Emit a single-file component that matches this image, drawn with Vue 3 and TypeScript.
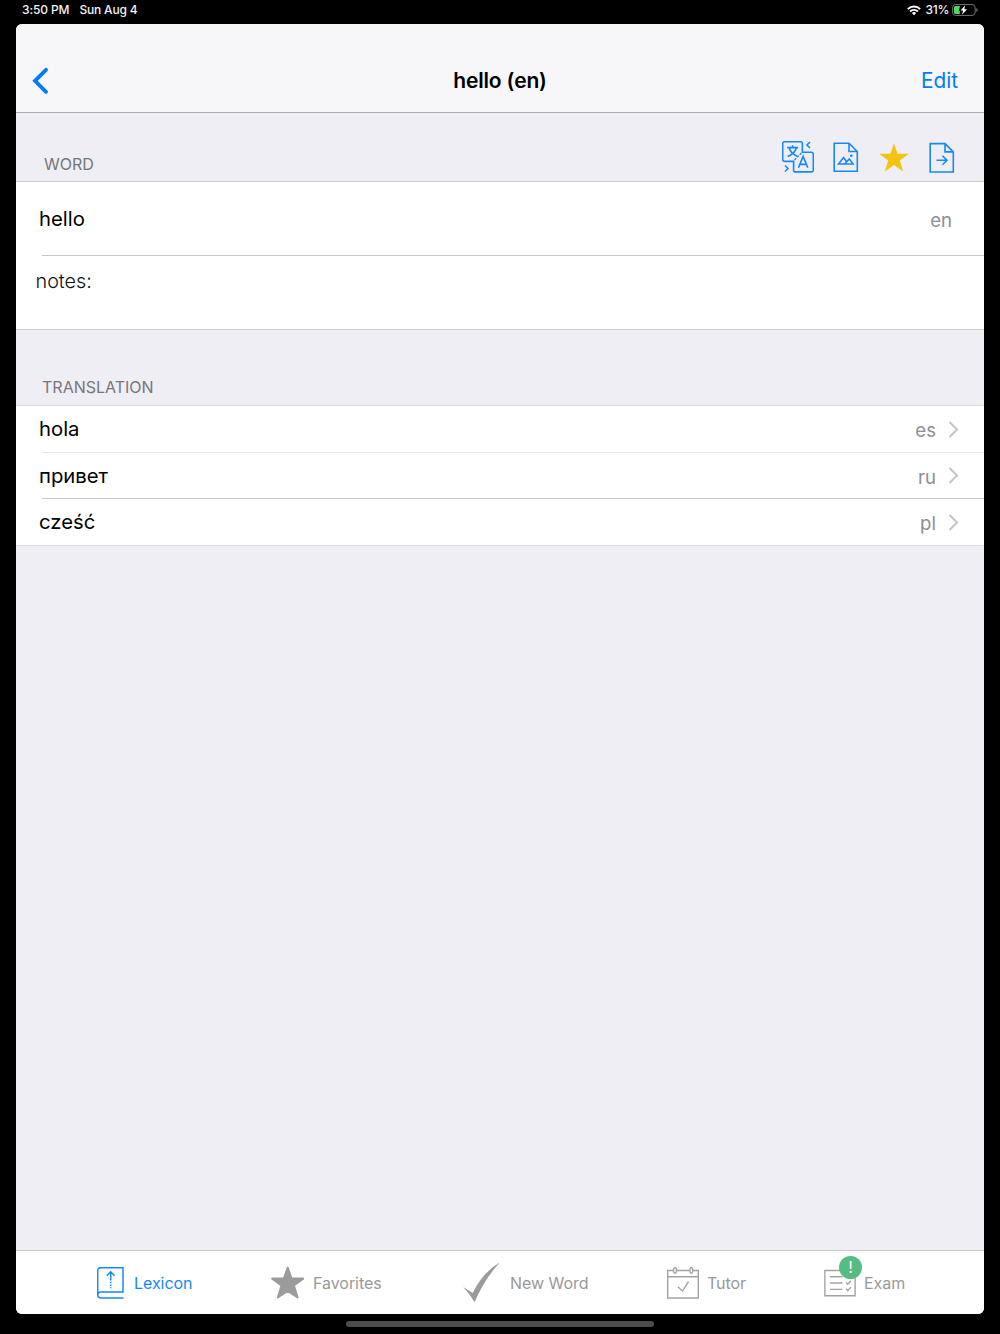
<script setup lang="ts">
interface Translation {
  text: string
  lang: string
}

const word: Translation = { text: 'hello', lang: 'en' }

const translations: Translation[] = [
  { text: 'hola', lang: 'es' },
  { text: 'привет', lang: 'ru' },
  { text: 'cześć', lang: 'pl' },
]
</script>

<template>
  <div class="device">
    <div class="status">
      <span class="time">3:50 PM</span>
      <span class="date">Sun Aug 4</span>
      <svg class="wifi" width="14" height="11" viewBox="0 0 14 11" fill="none" stroke="#fff" stroke-width="1.9">
        <path d="M0.8 4.1a8.8 8.8 0 0 1 12.4 0M3.1 6.5a5.5 5.5 0 0 1 7.8 0" />
        <path d="M7 10.2L4.9 8.1a3 3 0 0 1 4.2 0z" fill="#fff" stroke="none" />
      </svg>
      <span class="percent">31%</span>
      <svg class="battery" width="26" height="12" viewBox="0 0 26 12">
        <rect x="0.6" y="0.6" width="22.6" height="10.8" rx="3" fill="none" stroke="#747474" />
        <path d="M24.4 4v4q1.3-.6 1.3-2t-1.3-2z" fill="#747474" />
        <path d="M3.5 2H8L6.8 6.8h1V10H3.500Q2 10 2 8.500V3.500Q2 2 3.500 2z" fill="#4cd964" />
        <path d="M13.200 1.200L8.500 6.600h2.600L10 10.800l5.100-5.500h-2.800z" fill="#fff" />
      </svg>
    </div>

    <main class="window">
      <header class="nav">
        <svg class="back" width="18" height="28" viewBox="0 0 18 28" fill="none" stroke="#007aff" stroke-width="3.8" stroke-linecap="round" stroke-linejoin="miter">
          <path d="M15 2.800L4 13.800L15 24.800" />
        </svg>
        <h1>{{ word.text }} ({{ word.lang }})</h1>
        <a class="edit">Edit</a>
      </header>

      <div class="section word-head">
        <span class="caption">WORD</span>
        <div class="tools">
          <svg class="translate" width="32" height="32" viewBox="0 0 32 32" fill="none" stroke="#1688fb" stroke-width="1.6">
            <path d="M11.600 20.400H2.700a2 2 0 0 1-2-2V2.700a2 2 0 0 1 2-2h15.700a2 2 0 0 1 2 2v8.500h8.900a2 2 0 0 1 2 2v15.700a2 2 0 0 1-2 2H13.600a2 2 0 0 1-2-2z" />
            <path d="M19.500 12L12 19.500" stroke-width="1.200" stroke-dasharray="2.500 1.200" />
            <path d="M5.200 6.600h11M10.600 4.200v2.400M7.200 7q1.400 5.300 8.300 8.500M14.300 7q-1.500 5.500-8.600 8.500" />
            <path d="M16.400 26.800l4.700-11.400l4.700 11.400M17.900 23.400h6.400" />
            <path d="M28 1l-3 3l3 3M3 24.500l3 3l-3 3" />
          </svg>
          <svg class="doc" width="26" height="31" viewBox="0 0 26 31" fill="none" stroke="#1688fb" stroke-width="1.600">
            <path d="M1.200 1.200H16l8.300 8.300V29.200H1.200zM16 1.200v8.300h8.300" />
            <path d="M5.500 22L10.600 15.500l3 4.300 2.700-2.900 3.700 5.100zM12 21.700l2-2.500" />
            <circle cx="18.300" cy="13.800" r="1.300" fill="#1688fb" stroke="none" />
          </svg>
          <svg class="star" width="30" height="29" viewBox="0 0 30 29" fill="#f1c40f">
            <path d="M15 .2L18.600 10.700L29.800 10.800L20.800 17.600L24.200 28.500L15 22L5.800 28.500L9.200 17.600L.2 10.800L11.400 10.700z" />
          </svg>
          <svg class="doc last" width="26" height="31" viewBox="0 0 26 31" fill="none" stroke="#1688fb" stroke-width="1.600">
            <path d="M1.200 1.600H16L24.300 9.900V30H1.200zM16 1.600v8.300h8.300" />
            <path d="M7.500 18.200h10.500M13.500 13.700l4.500 4.500l-4.500 4.500" />
          </svg>
        </div>
      </div>

      <section class="group">
        <div class="row tall">
          <span class="text">{{ word.text }}</span>
          <span class="lang">{{ word.lang }}</span>
        </div>
        <div class="row notes"><span class="text">notes:</span></div>
      </section>

      <div class="section translation-head"><span class="caption">TRANSLATION</span></div>

      <section class="group list">
        <div v-for="item in translations" :key="item.lang" class="row">
          <span class="text">{{ item.text }}</span>
          <span class="lang">{{ item.lang }}</span>
          <svg class="chevron" width="11" height="17" viewBox="0 0 11 17" fill="none" stroke="#c5c5ca" stroke-width="2.100">
            <path d="M1.500 1L9 8.500L1.500 16" />
          </svg>
        </div>
      </section>

      <nav class="tabs">
        <a class="tab active">
          <svg width="27" height="32" viewBox="0 0 27 32" fill="none" stroke="#1688fb" stroke-width="1.500">
            <path d="M26.500 31H3.700a3 3 0 0 1-3-3V3.700a3 3 0 0 1 3-3H26V25H3.700a3 3 0 0 0-3 3" />
            <path d="M13.700 13.500V5.200M9.800 8.700L13.700 4.800l3.900 3.900" />
            <path d="M13.700 14.800v6.500" stroke-dasharray="1.500 1.200" />
          </svg>
          <span class="l1">Lexicon</span>
        </a>
        <a class="tab">
          <svg width="34" height="33" viewBox="0 0 34 33" fill="#9b9b9b" stroke="#9b9b9b" stroke-width="2" stroke-linejoin="round">
            <path d="M16.700 1.600L20.400 12.200L32.200 12.600L22.900 19.500L26.600 31.500L16.700 24.800L6.800 31.500L10.500 19.500L1.200 12.600L13 12.200z" />
          </svg>
          <span class="l2">Favorites</span>
        </a>
        <a class="tab">
          <svg width="37" height="40" viewBox="0 0 37 40" fill="#9b9b9b">
            <path d="M.2 24L9.700 30Q20 9 36.800 -.5Q21 16.500 11.600 39.300Q6.500 30.500 .2 24z" />
          </svg>
          <span class="l3">New Word</span>
        </a>
        <a class="tab">
          <svg width="32" height="32" viewBox="0 0 32 32" fill="none" stroke="#a3a3a3" stroke-width="1.400">
            <path d="M6.500 3.500H.7V31h30.600V3.500h-5.500M9.700 3.500h12.800M.7 9.700h30.600M11 19.700l4.500 4.500l6-9.500" />
            <rect x="6.600" y=".8" width="2.800" height="5.400" rx="1.400" />
            <rect x="22.900" y=".8" width="2.800" height="5.400" rx="1.400" />
          </svg>
          <span class="l4">Tutor</span>
        </a>
        <a class="tab">
          <span class="exam">
            <svg width="32" height="32" viewBox="0 0 32 32" fill="none" stroke="#a3a3a3" stroke-width="1.400">
              <path d="M.9 3.500h30.200v25.300H.9zM6 9.700h12.500M6 16h12.500M6 22.400h12.500M22 15.500l1.800 1.800l3-3.500M22 21.800l1.800 1.800l3-3.500" />
            </svg>
            <b class="badge">!</b>
          </span>
          <span class="l5">Exam</span>
        </a>
      </nav>
    </main>
    <div class="home"></div>
  </div>
</template>

<style>
body {
  margin: 0;
  background: #000;
}
</style>

<style scoped>
.device {
  box-sizing: border-box;
  width: 1000px;
  height: 1334px;
  padding: 0 16px;
  display: flex;
  flex-direction: column;
  background: #000;
  font-family: Inter, "Liberation Sans", sans-serif;
  overflow: hidden;
}
svg {
  display: block;
  flex: none;
}
.status {
  height: 24px;
  flex: none;
  display: flex;
  align-items: center;
  box-sizing: border-box;
  padding: 0 6px 4px;
  color: #f2f2f2;
  font-size: 12px;
  font-weight: 500;
  line-height: 20px;
  white-space: nowrap;
}
.time { letter-spacing: -0.1px; width: 57.5px; }
.date { letter-spacing: -0.2px; }
.wifi { margin-left: auto; margin-right: 1px; }
.percent { margin-left: 4px; width: 26.5px; letter-spacing: -0.2px; }
.battery { margin-right: 0; }
.window {
  height: 1290px;
  flex: none;
  display: flex;
  flex-direction: column;
  border-radius: 6px;
  overflow: hidden;
  background: #efeef4;
}
.nav {
  box-sizing: border-box;
  height: 89px;
  flex: none;
  display: grid;
  grid-template-columns: 1fr auto 1fr;
  align-items: center;
  padding: 25px 26px 0 15px;
  background: #f7f7f9;
  border-bottom: 1px solid #b0afb4;
}
h1 {
  margin: 0 0 0 11px;
  font-size: 21px;
  line-height: 26px;
  font-weight: 600;
  letter-spacing: -0.15px;
  color: #000;
}
.edit {
  justify-self: end;
  font-size: 20.8px;
  line-height: 26px;
  color: #007aff;
}
.section {
  box-sizing: border-box;
  flex: none;
  display: flex;
  border-bottom: 1px solid #cbcace;
}
.word-head {
  height: 69px;
  padding: 0 29px 0 28px;
  align-items: flex-start;
}
.caption {
  font-size: 16px;
  line-height: 20px;
  color: #76767b;
}
.word-head .caption { margin-top: 41px; }
.tools {
  display: flex;
  align-items: center;
  margin: 28px 0 0 auto;
}
.doc { margin-left: 19px; }
.star { margin-left: 20px; }
.doc.last { margin-left: 20px; }
.translation-head {
  height: 76px;
  padding: 47px 26px 0;
  border-color: #dddce1;
}
.group { flex: none; background: #fff; }
.row {
  height: 46px;
  display: flex;
  align-items: center;
  position: relative;
  padding: 0 25px 0 23px;
}
.row .text {
  font-size: 20.3px;
  line-height: 26px;
  color: #000;
}
.row .lang {
  margin-left: auto;
  margin-top: 2px;
  font-size: 18.6px;
  line-height: 24px;
  color: #8e8e93;
}
.chevron { margin-left: 12px; }
.row.tall { height: 73px; padding-right: 32px; }
.row.notes {
  height: 74px;
  box-sizing: border-box;
  align-items: flex-start;
  padding: 12px 19.5px;
  margin-top: 1px;
  border-bottom: 1px solid #cbcace;
}
.row.notes .text { font-size: 19.8px; font-weight: 300; color: #111; }
.row.tall::after,
.list .row::after {
  content: "";
  position: absolute;
  left: 26px;
  right: 0;
  bottom: -1px;
  height: 1px;
  background: #c8c7cc;
}
.list .row {
  box-sizing: border-box;
  height: 45.5px;
  margin-bottom: 1px;
  padding-top: 1px;
}
.list { border-bottom: 1px solid #dddce1; }
.list .row:first-child::after { background: #e8e8eb; }
.list .row:last-child { margin-bottom: 0; }
.list .row:last-child::after { display: none; }
.tabs {
  box-sizing: border-box;
  height: 64px;
  margin-top: auto;
  display: grid;
  grid-template-columns: 174px 192px 204px 157px 1fr;
  align-items: center;
  padding-left: 81px;
  background: #fff;
  border-top: 1px solid #cac9ce;
}
.tab {
  display: flex;
  align-items: center;
  font-size: 16px;
  line-height: 22px;
  color: #999;
  letter-spacing: -0.05px;
  white-space: nowrap;
}
.active { color: #1688fb; }
.l1 { margin-left: 10px; }
.l2 { margin-left: 8px; }
.l3 { margin-left: 10px; }
.l4 { margin-left: 8px; }
.l5 { margin-left: 8px; }
.exam { position: relative; }
.badge {
  position: absolute;
  left: 15px;
  top: -10.5px;
  width: 23px;
  height: 23px;
  border-radius: 50%;
  background: #56bc81;
  color: #fff;
  font-size: 16px;
  font-weight: 400;
  line-height: 23px;
  text-align: center;
}
.home {
  width: 308px;
  height: 6px;
  margin: 7px auto 0;
  border-radius: 3px;
  background: #4c4c4c;
  flex: none;
}
</style>
